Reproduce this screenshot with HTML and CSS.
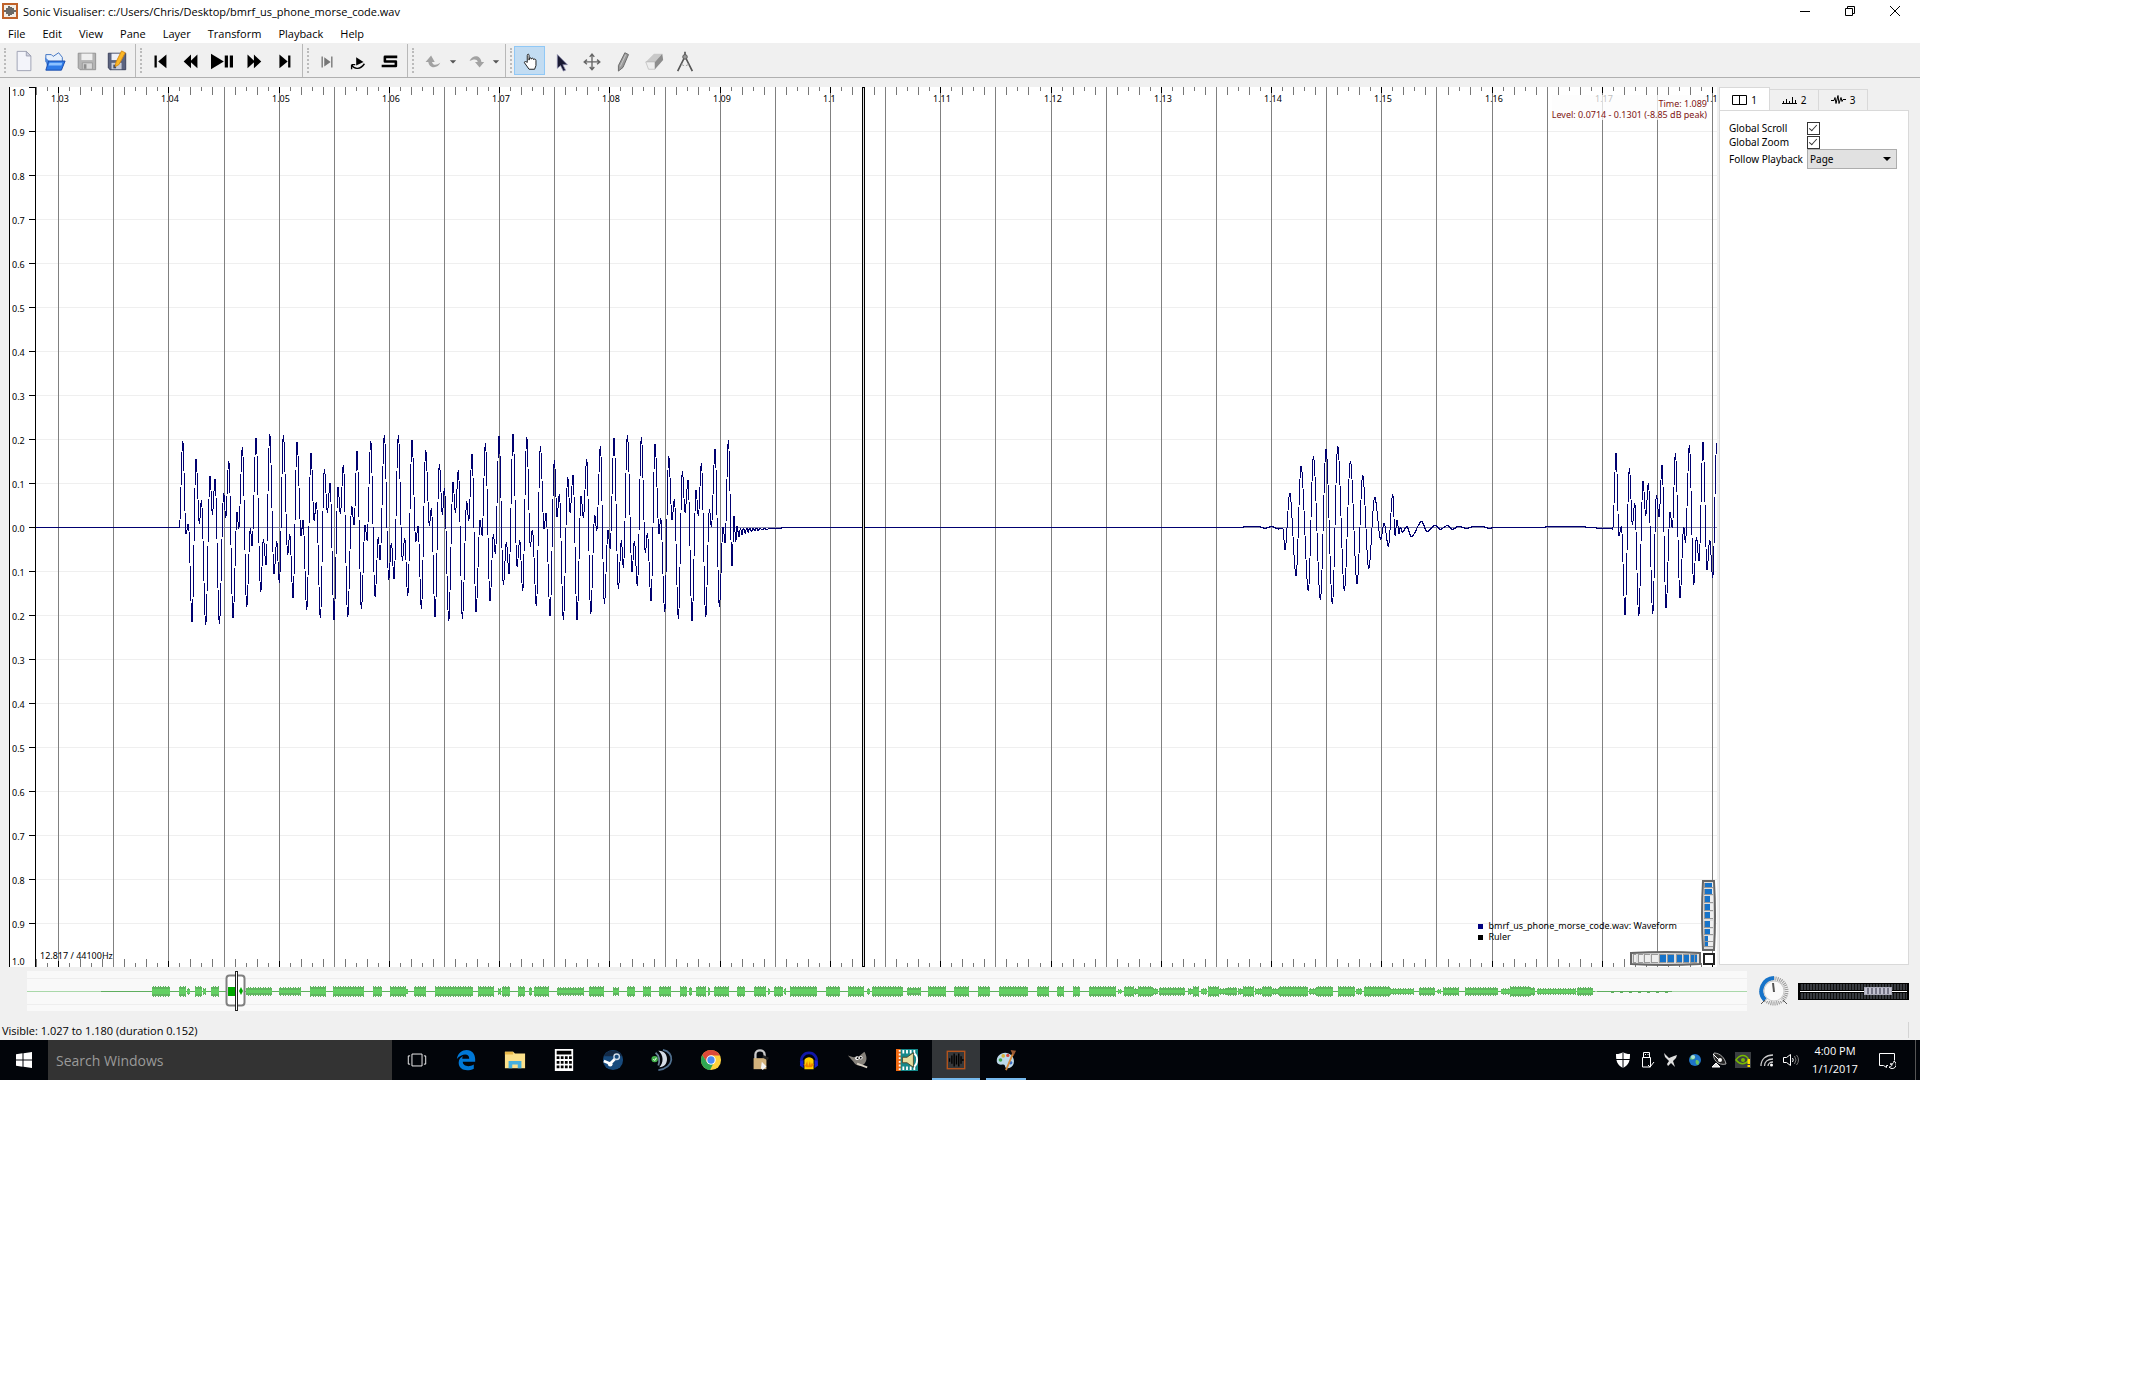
FILE: index.html
```html
<!DOCTYPE html>
<html lang="en">
<head>
  <meta charset="UTF-8" />
  <title>Sonic Visualiser</title>
  <link rel="stylesheet" href="styles.css">
</head>
<body>
  <div class="desktop">
    <div class="app">
      <header class="titlebar">
        <svg class="logo" viewBox="0 0 16 16"><rect x="1" y="1" width="14" height="14" fill="#f4efe8" stroke="#c0622a" stroke-width="2"/><path d="M3 9V7M5 11V5M7 13V3M9 12V4M11 11V5M13 9V7" fill="none" stroke="#222" stroke-width="1.300"/></svg>
        <span class="title">Sonic Visualiser: c:/Users/Chris/Desktop/bmrf_us_phone_morse_code.wav</span>
        <div class="window-buttons">
          <button aria-label="Minimise"><svg width="12" height="12"><path d="M1 6.500h10" stroke="#000"/></svg></button>
          <button aria-label="Restore"><svg width="12" height="12"><path d="M1.500 3.500h7v7h-7zM3.500 3.500v-2h7v7h-2" fill="none" stroke="#000"/></svg></button>
          <button aria-label="Close"><svg width="12" height="12"><path d="M1 1l10 10M11 1l-10 10" stroke="#000"/></svg></button>
        </div>
      </header>

      <nav class="menubar">
        <button>File</button>
        <button>Edit</button>
        <button>View</button>
        <button>Pane</button>
        <button>Layer</button>
        <button>Transform</button>
        <button>Playback</button>
        <button>Help</button>
      </nav>

      <div class="toolbar">
        <div class="group">
          <button aria-label="New"><svg viewBox="0 0 24 24"><path d="M4.500 1.500h10l5 5v16h-15z" fill="#f3f4fa" stroke="#9a9eb0"/><path d="M14.500 1.500v5h5z" fill="#cfd2e0" stroke="#9a9eb0"/></svg></button>
          <button aria-label="Open"><svg viewBox="0 0 24 24"><path d="M2 5h6l2 2 6-4 4 5v5H2z" fill="#e8f1fc" stroke="#3a6fc0"/><path d="M1 8l3 13 2-9z" fill="#4a86dd"/><path d="M5 12h18l-4 10H2z" fill="#2f7be8" stroke="#1748a8"/><path d="M6 14h14l-1 3H5z" fill="#8dc1ff"/></svg></button>
          <button aria-label="Save"><svg viewBox="0 0 24 24"><path d="M3.500 3.500h19v18h-17l-2-2z" fill="#b4b4b4" stroke="#8f8f8f"/><path d="M7 4h12v7H7z" fill="#efefef"/><path d="M8 14h11v7H8z" fill="#d9d9d9" stroke="#999"/><path d="M9.500 15.500h3v5h-3z" fill="#8d8d8d"/></svg></button>
          <button aria-label="Save As"><svg viewBox="0 0 24 24"><path d="M2.500 3.500h19v18h-17l-2-2z" fill="#5c6480" stroke="#343b55"/><path d="M6 4h11v7H6z" fill="#eef0f8"/><path d="M6 14h11v7H6z" fill="#c8ccd8"/><path d="M8 16h3v4H8z" fill="#444b66"/><path d="M17 1l4 2-7 13-4 2 1-5z" fill="#fbb827" stroke="#d88913"/></svg></button>
        </div>
        <div class="group">
          <button aria-label="Rewind to Start"><svg viewBox="0 0 24 24"><path d="M6 6h2.500v13H6zM19 5v15l-9-7.500z"/></svg></button>
          <button aria-label="Rewind"><svg viewBox="0 0 24 24"><path d="M12 5v15l-8-7.500zM19 5v15l-8-7.500z"/></svg></button>
          <button aria-label="Play / Pause"><svg viewBox="0 0 24 24"><path d="M0 4l14 8.500L0 21zM15 6h3.500v13H15zM20.500 6H24v13h-3.500z"/></svg></button>
          <button aria-label="Fast Forward"><svg viewBox="0 0 24 24"><path d="M6 5v15l8-7.500zM13 5v15l8-7.500z"/></svg></button>
          <button aria-label="Fast Forward to End"><svg viewBox="0 0 24 24"><path d="M16.500 6H19v13h-2.500zM7 5v15l9-7.500z"/></svg></button>
        </div>
        <div class="group">
          <button aria-label="Constrain Playback to Selection"><svg viewBox="0 0 24 24"><path d="M6 7h1.500v12H6zM16.500 7H18v12h-1.500zM9 8l7 5-7 5z" fill="#777"/></svg></button>
          <button aria-label="Loop Playback"><svg viewBox="0 0 24 24"><path d="M10 8l8 5-8 4z"/><path d="M5 21v-5M5 16h4M5 16c3 6 10 5 14-1" fill="none" stroke="#000" stroke-width="1.500"/></svg></button>
          <button aria-label="Solo Current Pane"><svg viewBox="0 0 24 24"><path d="M21 7.500H7.500v5H19.500v5H4" fill="none" stroke="#000" stroke-width="2.800" stroke-linejoin="round"/></svg></button>
        </div>
        <div class="group">
          <button aria-label="Undo"><svg viewBox="0 0 24 24"><path d="M5 13l6-7 4 7h-3c1 4 5 4 9 1-2 6-12 7-13-1z" fill="#a2a2a2"/></svg></button>
          <button class="drop" aria-label="Undo history"><svg viewBox="0 0 10 24"><path d="M1 11h8l-4 4z" fill="#555"/></svg></button>
          <button aria-label="Redo"><svg viewBox="0 0 24 24"><path d="M22 13l-5 6-5-6h3c-1-4-5-3-9-1 3-7 12-7 13 1z" fill="#a2a2a2"/></svg></button>
          <button class="drop" aria-label="Redo history"><svg viewBox="0 0 10 24"><path d="M1 11h8l-4 4z" fill="#555"/></svg></button>
        </div>
        <div class="group">
          <button class="active" aria-label="Navigate"><svg viewBox="0 0 24 24"><path d="M9 13V6c0-2 2-2 2 0v5-1c0-2 2.500-2 2.500 0 0-1.500 2.500-1.500 2.500.500 0-1 2.500-1 2.500 1V17l-1.500 4h-6l-5-7c-.500-1.500 1-2 3-.500z" fill="#fff" stroke="#111"/></svg></button>
          <button aria-label="Select"><svg viewBox="0 0 24 24"><path d="M8 5v15l3.500-3 3 6 2.500-1-3-6h5z" fill="#1a1a33" stroke="#8c8cae" stroke-width=".8"/></svg></button>
          <button aria-label="Edit"><svg viewBox="0 0 24 24"><path d="M12 5v16M4 13h16M9.500 7.500L12 4.500l2.500 3M9.500 18.500l2.500 3 2.500-3M6.500 10.500l-3 2.500 3 2.500M17.500 10.500l3 2.500-3 2.500" fill="none" stroke="#666" stroke-width="1.500"/></svg></button>
          <button aria-label="Draw"><svg viewBox="0 0 24 24"><path d="M14 3l4 2-6 14-5 4 0-6z" fill="#9a9a9a" stroke="#666"/><path d="M15 5l-6 13" stroke="#ccc"/></svg></button>
          <button aria-label="Erase"><svg viewBox="0 0 24 24"><path d="M3 13l9-9h9l-8 9z" fill="#c9c9c9"/><path d="M3 13h10v8H6z" fill="#eee" stroke="#aaa" stroke-width=".6"/><path d="M13 13l8-9 1 7-9 10z" fill="#8d8d8d"/></svg></button>
          <button aria-label="Measure"><svg viewBox="0 0 24 24"><path d="M12 2v4M11 9L7 17l-3 6M13 9l4 8 3 6" fill="none" stroke="#555" stroke-width="1.800"/><path d="M8 15q1 2 3 2M16 15q-1 2-3 2" fill="none" stroke="#999"/><circle cx="12" cy="7.500" r="2.500" fill="#999" stroke="#555"/></svg></button>
        </div>
      </div>

      <main class="workspace">
        <svg class="scale" id="scale" viewBox="0 0 27 880"></svg>
        <div class="pane">
          <svg class="graph" id="graph" viewBox="0 0 1681 880"></svg>
          <div class="readout">
            <span>Time: 1.089</span>
            <span>Level: 0.0714 - 0.1301 (-8.85 dB peak)</span>
          </div>
          <ul class="legend">
            <li class="wave">bmrf_us_phone_morse_code.wav: Waveform</li>
            <li>Ruler</li>
          </ul>
          <span class="rate">12.817 / 44100Hz</span>
          <svg class="wheels" id="wheels" viewBox="0 0 86 86"></svg>
        </div>
        <aside class="side">
          <div class="tabs">
            <button class="current"><svg width="15" height="10"><path d="M.5.5h14v9H.5zM7.500.5v9" fill="none" stroke="#000"/></svg>1</button>
            <button><svg width="15" height="10"><path d="M0 8.500h15M1.500 8V6M4.500 8V4M7.500 8V6M10.500 8V2M13.500 8V5" stroke="#000"/></svg>2</button>
            <button><svg width="15" height="10"><path d="M0 5.500h3l1-3 1 6 2-8 1 8 2-6 1 4 1-2h3" fill="none" stroke="#000"/></svg>3</button>
          </div>
          <div class="props">
            <label for="scroll">Global Scroll</label><input type="checkbox" id="scroll" checked>
            <label for="zoom">Global Zoom</label><input type="checkbox" id="zoom" checked>
            <label for="follow">Follow Playback</label>
            <select id="follow"><option>Page</option></select>
          </div>
        </aside>
      </main>

      <div class="bottom">
        <svg class="overview" id="overview" viewBox="0 0 1720 40"></svg>
        <svg class="knob" viewBox="0 0 32 32">
          <circle cx="16" cy="16" r="12.500" fill="none" stroke="#999" stroke-width="4" stroke-dasharray="1 1"/>
          <path d="M7 25A13 13 0 0 1 16 3" fill="none" stroke="#1673c9" stroke-width="4"/>
          <path d="M7 26h18l-9-9z" fill="#f0f0f0"/>
          <path d="M3 29l4-4M29 29l-4-4" stroke="#555"/>
          <circle cx="16" cy="16" r="10" fill="#fafafa" stroke="#ccc"/>
          <path d="M15 8l1 9" stroke="#555" stroke-width="2"/>
        </svg>
        <input class="level" type="range" min="0" max="100" value="81" aria-label="Playback level">
      </div>

      <footer class="status"><span>Visible: 1.027 to 1.180 (duration 0.152)</span></footer>
    </div>

    <div class="taskbar">
      <button class="start" aria-label="Start"><svg width="16" height="16"><path d="M0 2.300l6.500-1v6.200H0zM7.500 1.200L16 0v7.500H7.500zM0 8.500h6.500v6.200l-6.500-1zM7.500 8.500H16V16l-8.500-1.200z" fill="#fff"/></svg></button>
      <input class="search" type="text" placeholder="Search Windows" aria-label="Search Windows">
      <div class="tasks">
        <button aria-label="Task View"><svg viewBox="0 0 24 24"><path d="M6.500 5.500h11v13h-11zM4.500 7.500h-2v9h2M19.500 7.500h2v9h-2" fill="none" stroke="#fff"/></svg></button>
        <button aria-label="Edge"><svg viewBox="0 0 24 24"><path d="M2 11C3 4 8 1 12.500 1 19 1 22 6 22 11v3H8.500c0 5 7 6 12 3v4.500C13 25 4 23 4 15c0-4 2-6 5-7.500C8 8.500 7.800 10 8 10.500h7.500C15.500 4 7 5 2 11z" fill="#0078d7"/></svg></button>
        <button aria-label="File Explorer"><svg viewBox="0 0 24 24"><path d="M1 3h9l2 2h11v16H1z" fill="#fbe08a"/><path d="M1 3h9v3H1z" fill="#e8b84a"/><path d="M5 21v-8h14v8h-4v-4H9v4z" fill="#45b0df"/></svg></button>
        <button aria-label="Calculator"><svg viewBox="0 0 24 24"><path d="M2 0h20v24H2z" fill="#fff"/><path d="M4 2h16v4H4zM4 8h3v3H4zM8.500 8h3v3h-3zM13 8h3v3h-3zM17.500 8h3v3h-3zM4 13h3v3H4zM8.500 13h3v3h-3zM13 13h3v3h-3zM17.500 13h3v3h-3zM4 18h3v3H4zM8.500 18h3v3h-3zM13 18h3v3h-3zM17.500 18h3v3h-3z" fill="#000"/></svg></button>
        <button aria-label="Steam"><svg viewBox="0 0 24 24"><circle cx="12" cy="12" r="11" fill="#174a7c"/><path d="M2 8a11 11 0 0 1 20 0z" fill="#142a45"/><path d="M2 13l7 3 5-5" fill="none" stroke="#fff" stroke-width="3"/><circle cx="16" cy="8.500" r="3" fill="#174a7c" stroke="#cfdbe8" stroke-width="1.500"/><circle cx="9" cy="16.500" r="2.500" fill="#fff"/></svg></button>
        <button aria-label="TeamSpeak"><svg viewBox="0 0 24 24"><path d="M8 2c12-1 13 18 1 18 5-5 5-13-1-18z" fill="#d5dde6"/><path d="M13 1c13 2 13 20-5 22" fill="none" stroke="#50708f" stroke-width="2"/><path d="M5 4c4 3 5 9 3 14" fill="none" stroke="#6b8299" stroke-width="2"/><circle cx="4" cy="11" r="3.500" fill="#45b34c"/><path d="M2.500 11l1.500 1.500 2-3" fill="none" stroke="#fff"/></svg></button>
        <button aria-label="Chrome"><svg viewBox="0 0 24 24"><circle cx="12" cy="12" r="11" fill="#fdd03b"/><path d="M2.500 6.500A11 11 0 0 1 21.800 7H12l-5 7z" fill="#de4a3a"/><path d="M2.500 6.500L8 15l6 2-3 6A11 11 0 0 1 2.500 6.500z" fill="#2fa653"/><circle cx="12" cy="12" r="5.200" fill="#fff"/><circle cx="12" cy="12" r="4" fill="#4a8af4"/></svg></button>
        <button aria-label="Lock"><svg viewBox="0 0 24 24"><path d="M7 12V6c0-6 10-6 10 0v6" fill="none" stroke="#c8c8c8" stroke-width="2.500"/><path d="M5 10h14v12H5z" fill="#d2b27c"/><path d="M14 14l5 5-4 4-2-2z" fill="#f4f4f4"/><path d="M15 8l6 3" stroke="#222" stroke-width="3"/></svg></button>
        <button aria-label="Audacity"><svg viewBox="0 0 24 24"><path d="M4 17C0 0 24 0 20 17" fill="none" stroke="#1117a8" stroke-width="3"/><path d="M3 13l3-1v9l-4-3zM21 13l-3-1v9l4-3z" fill="#1a22d0"/><path d="M7 22V12c2-4 8-4 10 0v10z" fill="#ffd000"/><path d="M6 17l1-1 1 2 2-5 1 6 2-6 1 5 1-3 2 2 1-1-3 4H9z" fill="#f08000"/></svg></button>
        <button aria-label="GIMP"><svg viewBox="0 0 24 24"><path d="M1 7l6 2 6-1 6-5c3 5 3 10 0 13-5 4-10 2-12-2z" fill="#85817a"/><circle cx="11" cy="10" r="2" fill="#fff"/><circle cx="15" cy="9.500" r="2" fill="#fff"/><circle cx="11.500" cy="10" r="1" fill="#000"/><circle cx="15" cy="9.500" r="1" fill="#000"/><path d="M11 16l11 4" stroke="#d9d2c5" stroke-width="2"/></svg></button>
        <button aria-label="Media editor"><svg viewBox="0 0 24 24"><path d="M0 0h24v24H0z" fill="#15888a"/><path d="M0 0h5v24H0z" fill="#f06a12"/><path d="M3 2h2M3 6h2M3 10h2M3 14h2M3 18h2M3 22h2M8 1v4M12 1v4M16 1v4M20 1v4M8 19v4M12 19v4M16 19v4M20 19v4" stroke="#fff" stroke-width="2"/><path d="M7 9h5l7-5v16l-7-5H7z" fill="#e6dda0" stroke="#4a452b"/><path d="M20 5c4 3 4 11 0 14" fill="none" stroke="#fff" stroke-width="2"/></svg></button>
        <button class="focused" aria-label="Sonic Visualiser"><svg viewBox="0 0 24 24"><rect x="2.500" y="2.500" width="19" height="19" fill="#36383a" stroke="#b5541c" stroke-width="1.500"/><path d="M5 14v-4M7.500 16V7M10 19V5M12.500 17V7M15 19V5M17.500 16V8M19.500 13v-2" fill="none" stroke="#000" stroke-width="1.500"/></svg></button>
        <button class="running" aria-label="Paint"><svg viewBox="0 0 24 24"><path d="M2 14C1 5 12 1 18 7c5 5 3 14-5 14-3 0-1-4-4-4-2 0-6 1-7-3z" fill="#bcd9ea"/><circle cx="6" cy="12" r="2" fill="#3fa34a"/><circle cx="9" cy="7.500" r="2" fill="#d8b43a"/><circle cx="14" cy="7" r="1.800" fill="#d4493d"/><circle cx="17" cy="15" r="2" fill="#3c6fc9"/><path d="M20 4l-8 19" stroke="#d58a3a" stroke-width="2"/><path d="M17 1l6 1-3 6z" fill="#9b5a32"/></svg></button>
      </div>
      <div class="tray">
        <button aria-label="Defender"><svg viewBox="0 0 16 16"><path d="M8 0c2 1.500 4 2 7 2 0 7-1 11-7 14C2 13 1 9 1 2c3 0 5-.5 7-2z" fill="#fff"/><path d="M8 0v16M0 7.500h16" stroke="#02050a"/></svg></button>
        <button aria-label="USB"><svg viewBox="0 0 16 16"><path d="M4.500 5V.5h6V5M3.500 5.500h8V15h-8zM6 2.500h1M8.500 2.500h1M9 13l2 2 4-5" fill="none" stroke="#fff"/></svg></button>
        <button aria-label="Airplane"><svg viewBox="0 0 16 16"><path d="M1 1l5 5 5-2 3-1-1 3-3 3 2 6-4-4-3 3-1-2 2-3-4-4z" fill="#dedede"/></svg></button>
        <button aria-label="Globe"><svg viewBox="0 0 16 16"><circle cx="8" cy="8" r="6" fill="#1e73c9"/><path d="M4 4c3-2 5 0 4 2s-3 2-5 1zM9 8c3 0 4 2 2 5-2 0-3-3-2-5z" fill="#69c262"/><circle cx="6" cy="5" r="2" fill="#c9ecff" opacity=".7"/></svg></button>
        <button aria-label="Satellite"><svg viewBox="0 0 16 16"><path d="M3 1c-2 6 4 13 12 11C14 6 9 1 3 1z" fill="#222" stroke="#aaa"/><path d="M2 2l6 6M5 11l-4 4h8z" stroke="#fff" fill="#ddd"/><circle cx="9" cy="8" r="2" fill="#fff"/></svg></button>
        <button aria-label="NVIDIA"><svg viewBox="0 0 16 16"><path d="M0 0h16v16H0z" fill="#3b3f42"/><path d="M1 8c4-6 10-6 13 0-4 5-9 5-13 0z" fill="none" stroke="#77b900" stroke-width="1.500"/><circle cx="8" cy="8" r="2" fill="#77b900"/><path d="M12.500 7h2.500v5h-2.500zM12.500 13h2.500v2h-2.500z" fill="#ffe000"/></svg></button>
        <button aria-label="Network"><svg viewBox="0 0 16 16"><path d="M2 14C2 7 7 3 14 3M5.500 14c0-4 3-7 8.500-7M9 14c0-2 2-4 5-4" fill="none" stroke="#ccc" stroke-width="1.300"/><circle cx="12.500" cy="13" r="1.500" fill="#fff"/></svg></button>
        <button aria-label="Volume"><svg viewBox="0 0 16 16"><path d="M.5 5.500h3l4-3v11l-4-3h-3z" fill="none" stroke="#fff"/><path d="M9.500 6q1.500 2 0 4" fill="none" stroke="#fff"/><path d="M11.500 4q3 4 0 8M13.500 3q4 5 0 10" fill="none" stroke="#777"/></svg></button>
      </div>
      <div class="clock"><span>4:00 PM</span><span>1/1/2017</span></div>
      <button class="notes" aria-label="Notifications"><svg width="18" height="17"><path d="M10 13.500H8.500v2l-3-2h-4v-12h15v7" fill="none" stroke="#fff"/><path d="M12 12a3 3 0 0 0 4-3 4 4 0 1 1-5 6c2 0 3-1 3-3z" fill="none" stroke="#fff"/></svg></button>
    </div>
  </div>

  <script src="script.js"></script>
</body>
</html>
```

FILE: styles.css
```css
body {
  margin: 0;
  background: #fff;
  color: #000;
  font-family: "Open Sans", "Noto Sans", sans-serif;
  font-size: 11px;
}

button {
  padding: 0;
  border: 0;
  background: none;
  color: inherit;
  font: inherit;
}

svg {
  display: block;
}

.desktop {
  display: flex;
  flex-direction: column;
  margin-right: 224px;
}

.app {
  background: #f0f0f0;
}

.titlebar,
.menubar {
  display: flex;
  align-items: center;
  background: #fff;
}

.titlebar {
  box-sizing: border-box;
  height: 23px;
  padding: 0 3px 1px 2px;
  gap: 5px;
}

.logo {
  width: 16px;
  height: 16px;
}

.title {
  flex: 1;
}

.window-buttons {
  display: flex;
}

.window-buttons button {
  display: flex;
  justify-content: center;
  width: 45px;
}

.menubar {
  height: 20px;
  padding-left: 8px;
  gap: 17px;
  border-bottom: 1px solid #f0f0f0;
}

/* Toolbar */
.toolbar {
  display: flex;
  height: 33px;
  border-bottom: 1px solid #b0b0b0;
}

.group {
  display: flex;
  align-items: center;
  position: relative;
  padding: 0 3px 0 8px;
  border-right: 1px solid #b8b8b8;
}

.group:last-child {
  border-right: 0;
}

.group::before {
  content: "";
  position: absolute;
  left: 4px;
  top: 4px;
  bottom: 4px;
  border-left: 2px dotted #bbb;
}

.group button {
  display: flex;
  align-items: center;
  justify-content: center;
  width: 31px;
  height: 29px;
}

.group svg {
  width: 22px;
  height: 22px;
}

.group .drop {
  width: 12px;
}

.group .drop svg {
  width: 8px;
}

.group .active {
  background: #c2dcf2;
  box-shadow: inset 0 0 0 1px #90c8f6;
}

/* Panes */
.workspace {
  display: flex;
  padding: 9px 11px 0 9px;
}

.scale {
  flex: 0 0 27px;
  width: 27px;
  background: #fff;
}

.pane {
  flex: 1;
  position: relative;
  background: #fff;
}

.graph {
  width: 100%;
}

.scale text,
.graph text,
.readout,
.legend,
.rate {
  font-family: "Noto Sans", sans-serif;
  font-size: 9px;
}

.readout {
  display: flex;
  flex-direction: column;
  align-items: flex-end;
  position: absolute;
  top: 8px;
  right: 10px;
  padding-top: 3px;
  background: rgba(252, 252, 252, 0.75);
  color: #7d1414;
  line-height: 11px;
}

.legend {
  position: absolute;
  right: 40px;
  bottom: 25px;
  margin: 0;
  padding: 0;
  list-style: none;
  line-height: 11px;
}

.legend li::before {
  content: "";
  display: inline-block;
  width: 5px;
  height: 5px;
  margin-right: 5px;
  background: #000;
}

.legend .wave::before {
  background: #000080;
}

.rate {
  position: absolute;
  left: 4px;
  bottom: 5px;
  line-height: 12px;
}

.wheels {
  position: absolute;
  right: 1px;
  bottom: 1px;
  width: 86px;
}

/* Property tabs */
.side {
  display: flex;
  flex-direction: column;
  width: 190px;
  margin-left: 2px;
  font-family: "Noto Sans", sans-serif;
  font-size: 10px;
}

.tabs {
  display: flex;
  align-items: flex-end;
}

.tabs button {
  display: flex;
  align-items: center;
  justify-content: center;
  box-sizing: border-box;
  width: 49px;
  height: 21px;
  gap: 4px;
  border: 1px solid #d9d9d9;
  border-width: 1px 1px 0 0;
}

.tabs .current {
  width: 51px;
  height: 24px;
  margin-bottom: -1px;
  border-left-width: 1px;
  background: #fff;
}

.props {
  flex: 1;
  display: grid;
  grid-template-columns: 78px 90px;
  grid-template-rows: 14px 14px 20px;
  align-items: center;
  margin-bottom: 2px;
  padding: 10px 9px;
  border: 1px solid #d9d9d9;
  background: #fff;
  white-space: nowrap;
}

.props input {
  appearance: none;
  box-sizing: border-box;
  position: relative;
  width: 13px;
  height: 13px;
  margin: 0;
  border: 1px solid #333;
}

.props input:checked::after {
  content: "";
  position: absolute;
  left: 3px;
  top: 0;
  width: 3px;
  height: 7px;
  border: solid #333;
  border-width: 0 1px 1px 0;
  transform: rotate(42deg);
}

.props select {
  appearance: none;
  height: 20px;
  padding: 0 2px;
  border: 1px solid #adadad;
  border-radius: 0;
  background: #e1e1e1 url("data:image/svg+xml,%3Csvg xmlns='http://www.w3.org/2000/svg' width='8' height='4'%3E%3Cpath d='M0 0h8l-4 4z'/%3E%3C/svg%3E") no-repeat right 5px center;
  color: #000;
  font: inherit;
}

/* Overview and playback controls */
.bottom {
  display: flex;
  align-items: center;
  padding: 4px 11px 9px 27px;
}

.overview {
  flex: 1;
  min-width: 0;
  background: #f9f9f9;
}

.knob {
  width: 32px;
  height: 32px;
  margin: 0 8px 0 11px;
}

.level {
  appearance: none;
  width: 111px;
  height: 17px;
  margin: 0;
  background:
    linear-gradient(#000 1px, transparent 1px 7px, #000 7px 8px, #fff 8px 9px, #000 9px 10px, transparent 10px 16px, #000 16px),
    repeating-linear-gradient(90deg, #111 0 1px, #383b40 1px 3px);
  border: solid #000;
  border-width: 0 2px;
  box-sizing: border-box;
}

.level::-webkit-slider-thumb {
  appearance: none;
  width: 28px;
  height: 8px;
  border: 1px solid #aaaab8;
  background: repeating-linear-gradient(90deg, #c2c2d0 0 2px, #777788 2px 4px);
}

.status {
  display: flex;
  align-items: center;
  height: 20px;
  padding: 0 11px 0 2px;
}

.status::after {
  content: "";
  height: 16px;
  margin-left: auto;
  border-left: 1px solid #d4d4d4;
}

/* Taskbar */
.taskbar {
  display: flex;
  height: 40px;
  background: #02050a;
  color: #fff;
}

.start {
  display: flex;
  align-items: center;
  justify-content: center;
  width: 48px;
}

.search {
  width: 344px;
  box-sizing: border-box;
  padding: 0 8px;
  border: 0;
  background: #333;
  color: #fff;
  font-family: inherit;
  font-size: 14px;
}

.search::placeholder {
  color: #9a9a9a;
}

.tasks {
  display: flex;
  gap: 1px;
  margin-left: 1px;
}

.tasks button {
  display: flex;
  align-items: center;
  justify-content: center;
  box-sizing: border-box;
  width: 48px;
}

.tasks svg {
  width: 22px;
  height: 24px;
}

.tasks .focused {
  background: #333639;
  border-bottom: 2px solid #76b9ed;
  padding-top: 2px;
}

.tasks .running {
  width: 40px;
  margin-left: 5px;
  border-bottom: 2px solid #76b9ed;
  padding-top: 2px;
}

.tray {
  display: flex;
  gap: 8px;
  margin-left: auto;
}

.tray svg {
  width: 16px;
  height: 16px;
}

.clock {
  display: flex;
  flex-direction: column;
  justify-content: center;
  width: 72px;
  text-align: center;
  line-height: 18px;
}

.notes {
  display: flex;
  align-items: center;
  justify-content: center;
  width: 45px;
  padding-right: 12px;
  margin-right: 4px;
  border-right: 1px solid #555;
}
```

FILE: script.js
```javascript
const NS = 'http://www.w3.org/2000/svg';

function add(parent, tag, attrs, text) {
  const el = document.createElementNS(NS, tag);
  for (const key in attrs) el.setAttribute(key, attrs[key]);
  if (text) el.textContent = text;
  parent.appendChild(el);
  return el;
}

function box(parent, x, y, width, height, fill) {
  return add(parent, 'rect', { x, y, width, height, fill });
}

// Vertical level scale, 44px per 0.1
const scale = document.getElementById('scale');
box(scale, 0, 0, 1, 880, '#000');
box(scale, 26, 0, 1, 880, '#000');
for (let i = 0; i <= 20; i++) {
  const y = i * 44;
  if (i < 20) box(scale, 20, y, 7, 1, '#000');
  const base = i === 0 ? 9 : i === 20 ? 878 : y + 5;
  add(scale, 'text', { x: 3, y: base }, (Math.abs(10 - i) / 10).toFixed(1));
}

// Grid and time ruler, 55px per 0.005s
const graph = document.getElementById('graph');
for (let i = 1; i < 20; i++) box(graph, 0, i * 44, 1681, 1, '#efefef');
for (let i = -2; i <= 150; i++) {
  const x = Math.floor(22.6 + i * 11.027);
  if (i % 5 === 0) {
    box(graph, x, 0, 1, 880, '#808080');
  } else {
    const h = i % 2 === 0 ? 8 : 4;
    box(graph, x, 0, 1, h, '#777');
    box(graph, x, 880 - h, 1, h, '#777');
  }
  if (i % 10 === 0 && i >= 0) {
    box(graph, x, 0, 1, 6, '#000');
    box(graph, x, 874, 1, 6, '#000');
    // only the start of the last label has room
    const label = String((103 + i / 10) / 100);
    add(graph, 'text', { x: x - 7, y: 15 }, i === 150 ? label.slice(0, 3) : label);
  }
}

// Waveform, three points per pixel on both axes
const waves = [
  [114, `-342,382 88,382 92,250 98,124 104,310 108,400 115,372 121,470 126,664 131,400 138,178 144,320 148,370 154,302
  160,440 167,673 173,400 180,230 187,342 195,238 202,440 208,670 214,400 221,280 227,352 236,184 242,440 249,653
  256,400 261,338 266,384 277,143 284,420 290,620 296,470 301,385 306,436 318,114 325,420 332,574 340,418 348,494
  359,102 366,380 372,520 380,424 388,548 394,300 400,106 407,380 413,462 419,404 429,592 435,400 441,127 447,330
  453,406 459,362 470,628 476,380 483,160 488,290 492,360 499,307 505,440 511,653 517,400 523,208 532,336 540,250
  546,440 552,658 559,400 564,262 571,340 580,196 587,440 593,650 599,400 605,320 612,373 621,154 628,440 634,625
  640,440 645,376 651,420 662,124 669,440 675,588 682,440 685,412 690,478 703,106 710,400 716,538 724,430 732,535
  738,300 745,106 751,380 757,480 764,415 773,586 779,400 786,121 792,330 797,424 804,380 814,625 820,400 827,151
  833,320 838,376 844,325 850,460 855,650 861,400 868,194 877,343 883,265 889,440 896,661 902,420 909,248 916,337
  925,212 931,380 937,655 943,420 950,305 956,360 966,163`],
  [424, `36,163 42,400 48,634 54,440 60,362 66,405 76,130 83,400 90,601 96,440 100,404
  106,460 117,110 124,370 130,553 139,428 147,520 159,102 165,380 171,498 179,422 188,571 193,300 200,112 206,340
  211,438 217,390 229,616 234,400 241,139 247,330 252,385 258,340 264,480 270,646 276,400 283,181 291,349 298,283
  304,440 310,658 316,400 323,232 330,336 339,226 345,440 351,658 357,400 363,290 370,352 380,178 386,400 392,640
  398,440 404,346 410,390 421,139 427,400 433,610 440,440 444,392 450,444 462,115 468,380 475,565 484,422 490,502
  502,106 509,380 516,514 523,424 532,556 538,300 544,112 550,340 556,458 562,400 573,601 579,400 585,133 591,320
  597,400 602,355 608,460 614,634 620,400 626,169 632,300 636,358 643,298 649,440 655,655 661,420 667,214 675,336
  684,241 690,440 696,661 702,420 708,271 715,346 724,190 730,420 737,650 743,440 748,328 754,380 765,148 771,400
  778,619 784,440 789,382 795,427 805,121 811,330 816,496 822,350 827,425 831,380 837,410 841,384 846,404 850,385
  855,399 860,385 864,396 869,385 874,394 879,385 884,392 889,385 895,391 900,385 906,389 912,385 920,388 930,385
  960,385 970,382 2340,382`],
  [1204, `0,382 20,380 55,380 75,385 95,379 115,387 128,384 135,448 141,350 149,280 156,370 163,440 168,526 176,360
  183,200 191,360 205,571 213,350 220,170 227,360 241,598 250,300 258,148 266,400 277,610 285,280 293,139 302,400
  313,571 322,350 331,184 340,400 351,550 360,340 368,227 375,360 386,505 395,340 404,292 412,370 422,418 432,370
  438,395 445,438 451,350 458,284 465,405 471,360 477,400 481,382 487,397 500,380 514,409 525,385 535,382 545,365
  552,378 561,394 570,380 585,376 600,388 622,377 638,388 655,379 677,380 680,385 700,380 728,380 750,385 760,382
  870,382 960,380 1010,380 1070,384 1118,387 1122,260 1128,160 1133,360 1137,406 1144,380 1150,440 1155,643 1161,400
  1168,205 1177,373 1184,310 1190,440 1196,646 1202,420 1209,244 1217,346 1225,250 1231,440 1238,640 1244,420
  1249,287 1257,349 1266,196 1272,440 1278,622 1284,440 1290,338 1297,382 1306,160 1313,400 1320,592 1327,440
  1331,382 1336,427 1348,136 1354,400 1361,553 1369,412 1377,482 1389,127 1395,400 1401,508 1409,420 1418,532
  1423,300 1430,130`]
];

// Lowest and highest value of the curve in each pixel column
const columns = [];
for (const [offset, list] of waves) {
  const points = list.trim().split(/\s+/).map(p => p.split(',').map(Number));
  const turns = points.filter(([, y], i) => {
    if (i === 0 || i === points.length - 1) return true;
    return (y - points[i - 1][1]) * (points[i + 1][1] - y) <= 0;
  });
  for (let i = 1; i < turns.length; i++) {
    const [x0, y0] = turns[i - 1];
    const [x1, y1] = turns[i];
    const steps = Math.ceil((x1 - x0) * 4);
    for (let s = 0; s <= steps; s++) {
      const t = s / steps;
      const ease = t * t * (3 - 2 * t);
      const x = Math.floor(offset + (x0 + (x1 - x0) * t) / 3);
      const y = Math.floor(313 + (y0 + (y1 - y0) * ease) / 3);
      const col = columns[x] || (columns[x] = [y, y]);
      col[0] = Math.min(col[0], y);
      col[1] = Math.max(col[1], y);
    }
  }
}

box(graph, 0, 440, 1681, 1, '#8080a8');
let d = '';
columns.forEach(([top, bottom], x) => {
  d += `M${x} ${top}h1v${bottom - top + 1}h-1z`;
});
add(graph, 'path', { d, fill: '#000070' });

// Play cursor
box(graph, 826, 0, 3, 880, '#000');
box(graph, 827, 1, 1, 878, '#ddd');

// Thumb wheels beside the zoom reset box
const wheels = document.getElementById('wheels');
const frame = { fill: '#ddd', stroke: '#666', 'stroke-width': 2 };
add(wheels, 'path', { d: 'M73 1h11q2 35 0 69h-11q-2-35 0-69z', ...frame });
[[3, 4], [9, 5], [16, 6], [24, 6], [32, 6], [41, 6], [49, 5], [56, 5], [62, 4]].forEach(([y, h], i) => {
  box(wheels, 74, y, 9, h + 1, '#999');
  box(wheels, 75, y, 8, h, '#eee');
  box(wheels, 75, y, i < 2 ? 7 : i > 6 ? 3 : 5, h, '#1673c9');
});
add(wheels, 'path', { d: 'M1 73q35-2 69 0v11q-35 2-69 0z', ...frame });
[[4, 2], [9, 4], [15, 5], [22, 6], [30, 6], [38, 6], [47, 5], [54, 5], [61, 3], [65, 2]].forEach(([x, w], i) => {
  box(wheels, x - 1, 74, w + 1, 9, '#999');
  box(wheels, x, 75, w, 7, i < 4 ? '#eee' : '#1673c9');
});
add(wheels, 'rect', { x: 74, y: 74, width: 10, height: 10, fill: '#fff', stroke: '#222', 'stroke-width': 2 });

// Overview of the whole recording: [start, end, half height]
const overview = document.getElementById('overview');
const bursts = [
  [152, 170], [179, 186], [187, 190, 2], [195, 202], [203, 206, 2], [211, 219], [246, 272, 3], [279, 301, 3], [310, 326],
  [333, 364], [373, 382], [390, 406], [406, 408, 2], [414, 426], [435, 473], [478, 494], [498, 501, 2], [502, 510],
  [518, 525], [529, 532, 3], [534, 549], [557, 584, 3], [589, 604], [613, 619, 3], [627, 635], [643, 651], [659, 671],
  [680, 687], [689, 692, 3], [696, 706], [708, 710, 3], [714, 729], [737, 745], [754, 766], [768, 770, 2], [774, 783],
  [784, 786, 2], [790, 817], [826, 840], [848, 864], [867, 870, 2], [872, 903, 4], [907, 921, 3], [928, 946], [954, 969],
  [978, 990], [999, 1028], [1037, 1049], [1057, 1064], [1073, 1080], [1089, 1116], [1118, 1122, 1], [1124, 1134],
  [1134, 1138, 2], [1138, 1153], [1153, 1158, 2], [1159, 1185, 3], [1188, 1193, 2], [1193, 1199, 4], [1201, 1207, 2],
  [1208, 1219], [1219, 1226, 2], [1226, 1237, 3], [1238, 1243, 2], [1243, 1254], [1255, 1262, 2], [1262, 1272, 4],
  [1272, 1279, 2], [1279, 1308], [1309, 1316, 2], [1316, 1333, 4], [1338, 1355], [1356, 1362, 2], [1364, 1390],
  [1390, 1414, 2], [1419, 1435, 3], [1437, 1441, 1], [1443, 1459, 3], [1465, 1498, 3], [1501, 1510, 2], [1510, 1530, 4],
  [1530, 1535, 3], [1537, 1576, 2], [1577, 1593, 3]
];
for (const y of [7, 33]) box(overview, 0, y, 1720, 1, '#eee');
box(overview, 0, 20, 1720, 1, '#a9d8a9');
box(overview, 74, 20, 1494, 1, '#5fae5f');
for (const [start, end, half = 4] of bursts) {
  for (let x = start; x < end; x++) {
    const h = half + (x * 7 % 5 < 2 ? 1 : 0);
    box(overview, x - 27, 20 - h, 1, h * 2 + 1, '#5fb45f');
  }
  const inner = Math.max(half - 2, 1);
  box(overview, start - 27, 20 - inner, end - start, inner * 2 + 1, '#62d062');
}
box(overview, 1570, 20, 75, 1, '#5fae5f');
for (let x = 1611; x < 1672; x += 9) box(overview, x - 27, 20, 3, 2, '#5fae5f');

// Visible range
add(overview, 'rect', { x: 199.5, y: 4.5, width: 18, height: 30, rx: 3, fill: '#fff', stroke: '#808080', 'stroke-width': 2 });
box(overview, 201, 16, 8, 9, '#00a800');
add(overview, 'path', { d: 'M212 20l2-4 2 4-2 4z', fill: '#00a800' });
box(overview, 208, 0, 3, 40, '#222');
box(overview, 209, 1, 1, 38, '#fff');
```
